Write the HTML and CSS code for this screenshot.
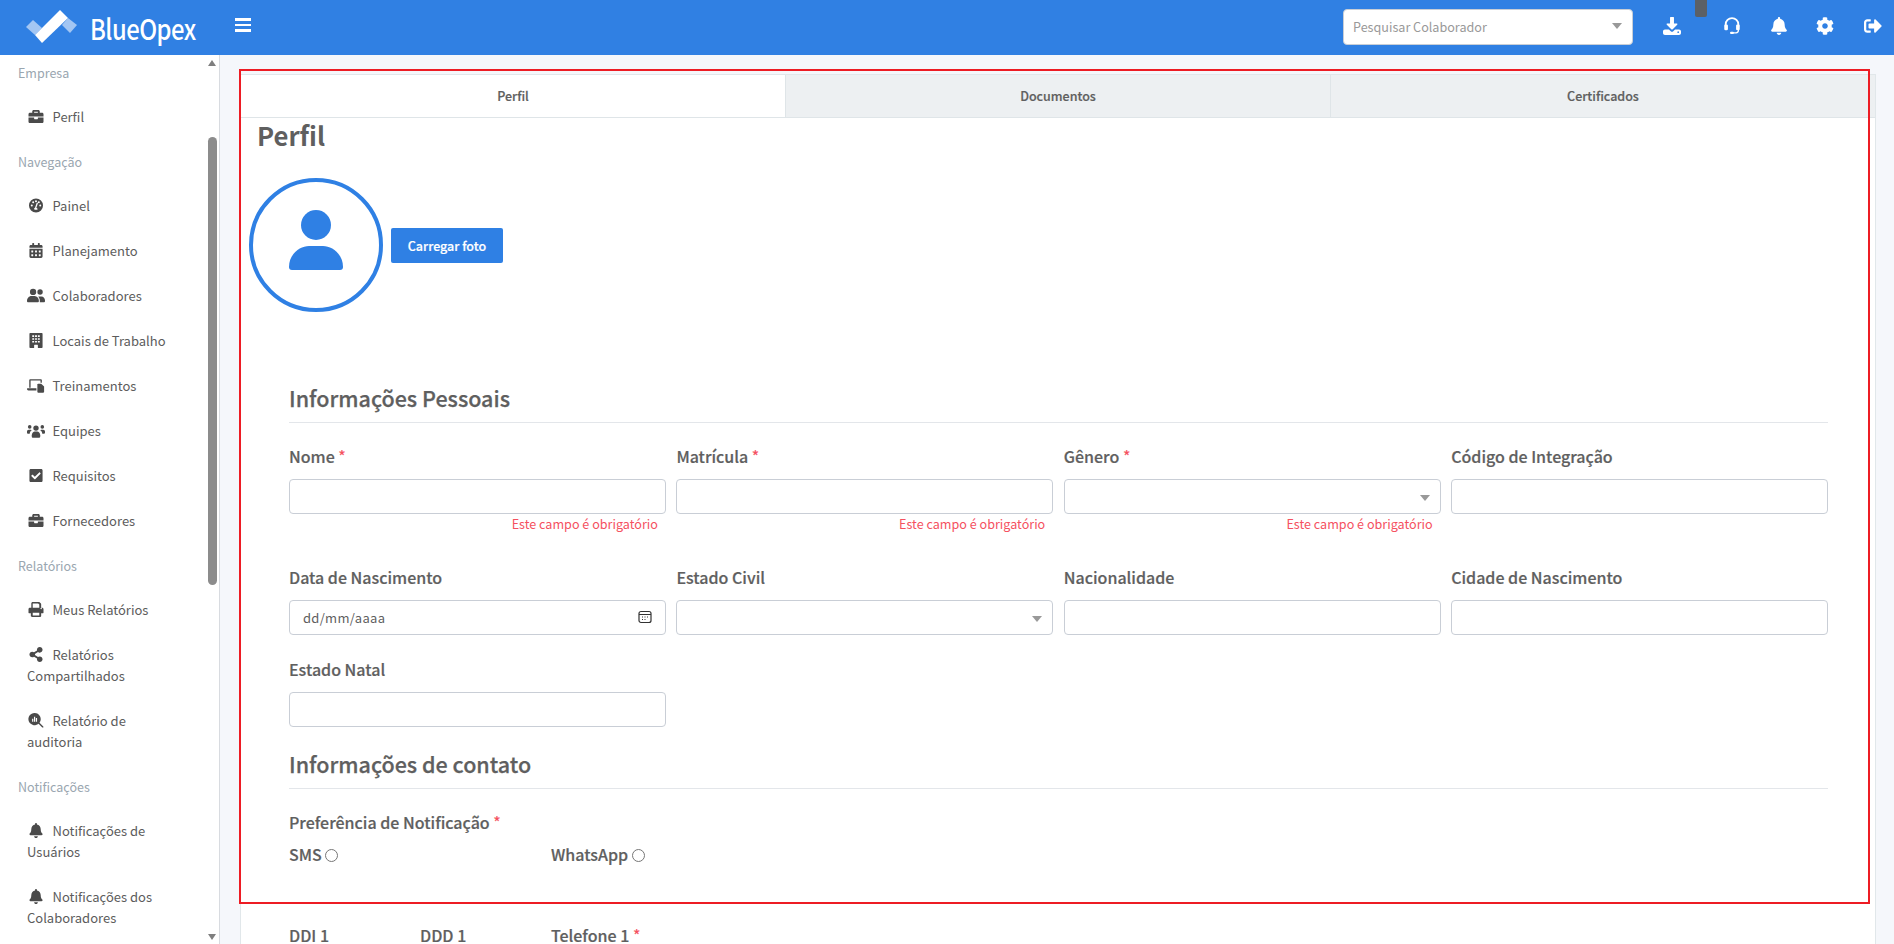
FILE: index.html
```html
<!DOCTYPE html>
<html lang="pt-BR">
<head>
    <meta charset="UTF-8">
    <meta name="viewport" content="width=device-width, initial-scale=1.0">
    <title>BlueOpex - Perfil</title>
    <link rel="stylesheet" href="styles.css">
</head>
<body>
    <svg class="icon-defs" aria-hidden="true">
        <symbol id="i-briefcase" viewBox="0 0 512 512"><path d="M320 336c0 8.84-7.16 16-16 16h-96c-8.84 0-16-7.16-16-16v-48H0v144c0 25.6 22.4 48 48 48h416c25.6 0 48-22.4 48-48V288H320v48zm144-208h-80V80c0-25.6-22.4-48-48-48H176c-25.6 0-48 22.4-48 48v48H48c-25.6 0-48 22.4-48 48v80h512v-80c0-25.6-22.4-48-48-48zm-144 0H192V96h128v32z"/></symbol>
        <symbol id="i-gauge" viewBox="0 0 512 512"><path fill-rule="evenodd" d="M256 16a240 240 0 1 0 0 480 240 240 0 0 0 0-480zm0 64a34 34 0 1 1 0 68 34 34 0 0 1 0-68zM112 288a34 34 0 1 1 0-68 34 34 0 0 1 0 68zm48-112a34 34 0 1 1 0-68 34 34 0 0 1 0 68zm146 224H206a50 50 0 0 1 20-78l52-150a22 22 0 0 1 42 14l-52 150a50 50 0 0 1 38 64zm46-224a34 34 0 1 1 0-68 34 34 0 0 1 0 68zm48 112a34 34 0 1 1 0-68 34 34 0 0 1 0 68z"/></symbol>
        <symbol id="i-calendar" viewBox="0 0 448 512"><path d="M0 464c0 26.5 21.5 48 48 48h352c26.5 0 48-21.5 48-48V192H0v272zm320-196c0-6.6 5.4-12 12-12h40c6.6 0 12 5.4 12 12v40c0 6.6-5.4 12-12 12h-40c-6.6 0-12-5.4-12-12v-40zm0 128c0-6.6 5.4-12 12-12h40c6.6 0 12 5.4 12 12v40c0 6.6-5.4 12-12 12h-40c-6.6 0-12-5.4-12-12v-40zM192 268c0-6.6 5.4-12 12-12h40c6.6 0 12 5.4 12 12v40c0 6.6-5.4 12-12 12h-40c-6.6 0-12-5.4-12-12v-40zm0 128c0-6.6 5.4-12 12-12h40c6.6 0 12 5.4 12 12v40c0 6.6-5.4 12-12 12h-40c-6.6 0-12-5.4-12-12v-40zM64 268c0-6.6 5.4-12 12-12h40c6.6 0 12 5.4 12 12v40c0 6.6-5.4 12-12 12H76c-6.6 0-12-5.4-12-12v-40zm0 128c0-6.6 5.4-12 12-12h40c6.6 0 12 5.4 12 12v40c0 6.6-5.4 12-12 12H76c-6.6 0-12-5.4-12-12v-40zM400 64h-48V16c0-8.8-7.2-16-16-16h-32c-8.8 0-16 7.2-16 16v48H160V16c0-8.8-7.2-16-16-16h-32c-8.8 0-16 7.2-16 16v48H48C21.5 64 0 85.5 0 112v48h448v-48c0-26.5-21.5-48-48-48z"/></symbol>
        <symbol id="i-friends" viewBox="0 0 640 512"><circle cx="216" cy="130" r="112"/><circle cx="464" cy="130" r="96"/><path d="M0 440c0-88 70-168 160-168h112c88 0 150 78 150 168v24c0 18-14 32-32 32H32c-18 0-32-14-32-32v-24z"/><path d="M456 496h152c18 0 32-14 32-32v-32c0-72-54-144-128-144h-64c-18 0-34 4-48 12 32 34 56 84 56 144v52z"/></symbol>
        <symbol id="i-building" viewBox="0 0 448 512"><path fill-rule="evenodd" d="M24 0h400c13 0 24 11 24 24v464c0 13-11 24-24 24H288v-96c0-9-7-16-16-16h-96c-9 0-16 7-16 16v96H24c-13 0-24-11-24-24V24C0 11 11 0 24 0zm72 80v56h64V80H96zm96 0v56h64V80h-64zm96 0v56h64V80h-64zM96 176v56h64v-56H96zm96 0v56h64v-56h-64zm96 0v56h64v-56h-64zM96 272v56h64v-56H96zm96 0v56h64v-56h-64zm96 0v56h64v-56h-64z"/></symbol>
        <symbol id="i-devices" viewBox="0 0 640 512"><path d="M80 64c0-18 14-32 32-32h384c18 0 32 14 32 32v96h-48V80H128v256H80V64z"/><path d="M16 352h320v80H48c-26 0-48-22-48-48v-16c0-9 7-16 16-16z"/><path d="M400 192h104l104 104v184c0 18-14 32-32 32H400c-18 0-32-14-32-32V224c0-18 14-32 32-32z"/></symbol>
        <symbol id="i-users" viewBox="0 0 640 512"><circle cx="96" cy="128" r="64"/><circle cx="544" cy="128" r="64"/><circle cx="320" cy="170" r="96"/><path d="M170 480v-56c0-74 60-128 106-128h88c46 0 106 54 106 128v56c0 18-14 32-32 32H202c-18 0-32-14-32-32z"/><path d="M0 340v-44c0-36 28-64 64-64h64c16 0 32 6 44 18-42 24-68 58-76 122H32c-18 0-32-14-32-32zM640 340v-44c0-36-28-64-64-64h-64c-16 0-32 6-44 18 42 24 68 58 76 122h64c18 0 32-14 32-32z"/></symbol>
        <symbol id="i-check" viewBox="0 0 448 512"><path d="M400 480H48c-26.51 0-48-21.49-48-48V80c0-26.51 21.49-48 48-48h352c26.51 0 48 21.49 48 48v352c0 26.51-21.49 48-48 48zm-204.686-98.059l184-184c6.248-6.248 6.248-16.379 0-22.627l-22.627-22.627c-6.248-6.248-16.379-6.249-22.628 0L184 302.745l-70.059-70.059c-6.248-6.248-16.379-6.248-22.628 0l-22.627 22.627c-6.248 6.248-6.248 16.379 0 22.627l104 104c6.249 6.25 16.379 6.25 22.628.001z"/></symbol>
        <symbol id="i-print" viewBox="0 0 512 512"><path fill-rule="evenodd" d="M96 48c0-26 22-48 48-48h208c13 0 25 5 34 14l32 32c9 9 14 21 14 34v112h32c26 0 48 22 48 48v128c0 9-7 16-16 16h-64v96c0 18-14 32-32 32H112c-18 0-32-14-32-32v-96H16c-9 0-16-7-16-16V240c0-26 22-48 48-48h48V48zm48 144h224V88l-40-40H144v144zm0 176v96h224v-96H144zm288-120a24 24 0 1 0 0-48 24 24 0 0 0 0 48z"/></symbol>
        <symbol id="i-share" viewBox="0 0 448 512"><path d="M352 320c-22.608 0-43.387 7.819-59.79 20.895l-102.486-64.054a96.551 96.551 0 0 0 0-41.683l102.486-64.054C308.613 184.181 329.392 192 352 192c53.019 0 96-42.981 96-96S405.019 0 352 0s-96 42.981-96 96c0 7.158.79 14.13 2.276 20.841L155.790 180.895C139.387 167.819 118.608 160 96 160c-53.019 0-96 42.981-96 96s42.981 96 96 96c22.608 0 43.387-7.819 59.79-20.895l102.486 64.054A96.301 96.301 0 0 0 256 416c0 53.019 42.981 96 96 96s96-42.981 96-96-42.981-96-96-96z"/></symbol>
        <symbol id="i-audit" viewBox="0 0 512 512"><path fill-rule="evenodd" d="M208 0a208 208 0 0 1 168 330l128 128c9 9 9 25 0 34s-25 9-34 0L342 364A208 208 0 1 1 208 0zm-84 200v96h40v-96h-40zm64-70v166h40V130h-40zm64 40v126h40V170h-40z"/></symbol>
        <symbol id="i-bell" viewBox="0 0 448 512"><path d="M224 512c35.32 0 63.97-28.65 63.97-64H160.03c0 35.35 28.65 64 63.97 64zm215.39-149.71c-19.32-20.76-55.47-51.99-55.47-154.29 0-77.7-54.48-139.9-127.94-155.16V32c0-17.67-14.32-32-31.98-32s-31.98 14.33-31.98 32v20.84C118.56 68.1 64.08 130.3 64.08 208c0 102.3-36.15 133.53-55.47 154.29-6 6.45-8.66 14.16-8.61 21.71.11 16.4 12.98 32 32.1 32h383.8c19.12 0 32-15.6 32.1-32 .05-7.55-2.61-15.27-8.61-21.71z"/></symbol>
        <symbol id="i-cog" viewBox="0 0 512 512"><path d="M487.4 315.7l-42.6-24.6c4.3-23.2 4.3-47 0-70.2l42.6-24.6c4.9-2.8 7.1-8.6 5.5-14-11.1-35.6-30-67.8-54.7-94.6-3.8-4.1-10-5.1-14.8-2.3L380.8 110c-17.9-15.4-38.5-27.3-60.8-35.1V25.8c0-5.6-3.9-10.5-9.4-11.7-36.7-8.2-74.3-7.8-109.2 0-5.5 1.2-9.4 6.1-9.4 11.7V75c-22.2 7.9-42.8 19.8-60.8 35.1L88.7 85.5c-4.9-2.8-11-1.9-14.8 2.3-24.7 26.7-43.6 58.9-54.7 94.6-1.7 5.4.6 11.2 5.5 14L67.3 221c-4.3 23.2-4.3 47 0 70.2l-42.6 24.6c-4.9 2.8-7.1 8.6-5.5 14 11.1 35.6 30 67.8 54.7 94.6 3.8 4.1 10 5.1 14.8 2.3l42.6-24.6c17.9 15.4 38.5 27.3 60.8 35.1v49.2c0 5.6 3.9 10.5 9.4 11.7 36.7 8.2 74.3 7.8 109.2 0 5.5-1.2 9.4-6.1 9.4-11.7v-49.2c22.2-7.9 42.8-19.8 60.8-35.1l42.6 24.6c4.9 2.8 11 1.9 14.8-2.3 24.7-26.7 43.6-58.9 54.7-94.6 1.5-5.5-.7-11.3-5.6-14.1zM256 336c-44.1 0-80-35.9-80-80s35.9-80 80-80 80 35.9 80 80-35.9 80-80 80z"/></symbol>
        <symbol id="i-download" viewBox="0 0 512 512"><path d="M216 0h80c9 0 16 7 16 16v168h78c18 0 27 21 14 34L270 352c-8 8-20 8-28 0L108 218c-13-13-4-34 14-34h78V16c0-9 7-16 16-16z"/><path d="M56 352h112l52 52c20 20 52 20 72 0l52-52h112c31 0 56 25 56 56v48c0 31-25 56-56 56H56c-31 0-56-25-56-56v-48c0-31 25-56 56-56zm376 104a24 24 0 1 0 0-48 24 24 0 0 0 0 48z" fill-rule="evenodd"/></symbol>
        <symbol id="i-headset" viewBox="0 0 512 512">
            <path d="M76 280v-70a180 180 0 0 1 360 0v70" fill="none" stroke="currentColor" stroke-width="52"/>
            <rect x="36" y="210" width="104" height="170" rx="40"/>
            <rect x="372" y="210" width="104" height="170" rx="40"/>
            <path d="M440 360v20a70 70 0 0 1-70 70H280" fill="none" stroke="currentColor" stroke-width="36"/>
            <rect x="200" y="420" width="110" height="64" rx="30"/>
        </symbol>
        <symbol id="i-signout" viewBox="0 0 512 512"><path d="M497 273L329 441c-15 15-41 4.500-41-17v-96H152c-13 0-24-11-24-24v-96c0-13 11-24 24-24h136V88c0-21 26-32 41-17l168 168c9 9 9 25 0 34z"/><path d="M192 436v-40c0-7-5-12-12-12H96c-18 0-32-14-32-32V160c0-18 14-32 32-32h84c7 0 12-5 12-12V76c0-7-5-12-12-12H96c-53 0-96 43-96 96v192c0 53 43 96 96 96h84c7 0 12-5 12-12z"/></symbol>
    </svg>

    <header class="topbar">
        <div class="brand">
            <svg class="brand-mark" viewBox="0 0 52 34">
                <path class="mark-light" d="M0 17l7-7 9 8-7 7z"/>
                <path class="mark-light" d="M42 8l9 7-7 8-8-8z"/>
                <path class="mark-white" d="M9 25l7-7L34 0l8 8-26 25z"/>
            </svg>
            <span class="brand-name">BlueOpex</span>
        </div>
        <div class="hamburger"><span></span><span></span><span></span></div>
        <div class="top-search">
            <span>Pesquisar Colaborador</span>
            <i class="caret"></i>
        </div>
        <nav class="top-icons">
            <svg class="top-icon"><use href="#i-download"/></svg>
            <svg class="top-icon"><use href="#i-headset"/></svg>
            <svg class="top-icon"><use href="#i-bell"/></svg>
            <svg class="top-icon"><use href="#i-cog"/></svg>
            <svg class="top-icon"><use href="#i-signout"/></svg>
        </nav>
        <div class="phone-tab"></div>
    </header>

    <div class="layout">
        <aside class="sidebar">
            <div class="side-title">Empresa</div>
            <a class="side-item"><svg class="side-icon"><use href="#i-briefcase"/></svg>Perfil</a>
            <div class="side-title">Navegação</div>
            <a class="side-item"><svg class="side-icon"><use href="#i-gauge"/></svg>Painel</a>
            <a class="side-item"><svg class="side-icon"><use href="#i-calendar"/></svg>Planejamento</a>
            <a class="side-item"><svg class="side-icon"><use href="#i-friends"/></svg>Colaboradores</a>
            <a class="side-item"><svg class="side-icon"><use href="#i-building"/></svg>Locais de Trabalho</a>
            <a class="side-item"><svg class="side-icon"><use href="#i-devices"/></svg>Treinamentos</a>
            <a class="side-item"><svg class="side-icon"><use href="#i-users"/></svg>Equipes</a>
            <a class="side-item"><svg class="side-icon"><use href="#i-check"/></svg>Requisitos</a>
            <a class="side-item"><svg class="side-icon"><use href="#i-briefcase"/></svg>Fornecedores</a>
            <div class="side-title">Relatórios</div>
            <a class="side-item"><svg class="side-icon"><use href="#i-print"/></svg>Meus Relatórios</a>
            <a class="side-item"><svg class="side-icon"><use href="#i-share"/></svg>Relatórios Compartilhados</a>
            <a class="side-item"><svg class="side-icon"><use href="#i-audit"/></svg>Relatório de auditoria</a>
            <div class="side-title">Notificações</div>
            <a class="side-item"><svg class="side-icon"><use href="#i-bell"/></svg>Notificações de Usuários</a>
            <a class="side-item"><svg class="side-icon"><use href="#i-bell"/></svg>Notificações dos Colaboradores</a>
            <div class="scroll-up"></div>
            <div class="scroll-thumb"></div>
            <div class="scroll-down"></div>
        </aside>

        <main class="content">
            <section class="card">
                <div class="tabs">
                    <div class="tab active">Perfil</div>
                    <div class="tab">Documentos</div>
                    <div class="tab">Certificados</div>
                </div>
                <h1 class="page-title">Perfil</h1>
                <div class="photo-row">
                    <div class="avatar">
                        <svg viewBox="0 0 54 60" class="avatar-icon">
                            <circle cx="27" cy="15" r="15"/>
                            <path d="M0 57C0 44 11 36 20 36h14c9 0 20 8 20 21 0 2-1 3-3 3H3c-2 0-3-1-3-3z"/>
                        </svg>
                    </div>
                    <button class="btn-upload">Carregar foto</button>
                </div>

                <div class="form">
                    <h2 class="section-title first">Informações Pessoais</h2>
                    <div class="form-row">
                        <div class="field">
                            <label>Nome <b>*</b></label>
                            <input type="text">
                            <div class="error">Este campo é obrigatório</div>
                        </div>
                        <div class="field">
                            <label>Matrícula <b>*</b></label>
                            <input type="text">
                            <div class="error">Este campo é obrigatório</div>
                        </div>
                        <div class="field">
                            <label>Gênero <b>*</b></label>
                            <div class="select"><i class="caret"></i></div>
                            <div class="error">Este campo é obrigatório</div>
                        </div>
                        <div class="field">
                            <label>Código de Integração</label>
                            <input type="text">
                        </div>
                    </div>
                    <div class="form-row">
                        <div class="field">
                            <label>Data de Nascimento</label>
                            <div class="select date">dd/mm/aaaa
                                <svg class="date-icon" viewBox="0 0 14 14">
                                    <rect x="1" y="1.500" width="12" height="11" rx="2"/>
                                    <path d="M1 4.500h12M4 7h1M6.500 7h1M9 7h1M4 9.500h1M6.500 9.500h1"/>
                                </svg>
                            </div>
                        </div>
                        <div class="field">
                            <label>Estado Civil</label>
                            <div class="select"><i class="caret"></i></div>
                        </div>
                        <div class="field">
                            <label>Nacionalidade</label>
                            <input type="text">
                        </div>
                        <div class="field">
                            <label>Cidade de Nascimento</label>
                            <input type="text">
                        </div>
                    </div>
                    <div class="form-row">
                        <div class="field">
                            <label>Estado Natal</label>
                            <input type="text">
                        </div>
                    </div>

                    <h2 class="section-title contact">Informações de contato</h2>
                    <label class="pref-label">Preferência de Notificação <b>*</b></label>
                    <div class="radio-row">
                        <label>SMS <input type="radio" name="pref"></label>
                        <label>WhatsApp <input type="radio" name="pref"></label>
                    </div>
                    <div class="phone-row">
                        <label>DDI 1</label>
                        <label>DDD 1</label>
                        <label>Telefone 1 <b>*</b></label>
                    </div>
                </div>
            </section>
        </main>
    </div>

    <div class="highlight"></div>
</body>
</html>
```

FILE: styles.css
```css
* {
    box-sizing: border-box;
}
html, body {
    height: 100%;
}
body {
    margin: 0;
    overflow: hidden;
    display: flex;
    flex-direction: column;
    background-color: #f5f7fb;
    color: #5f5f5f;
    font-family: "Noto Sans CJK SC", "Noto Sans", sans-serif;
    font-size: 13px;
}
.icon-defs {
    display: none;
}

/* top bar */
.topbar {
    position: relative;
    flex: none;
    height: 55px;
    display: flex;
    align-items: center;
    background-color: #3080e3;
    color: #fff;
}
.brand {
    width: 235px;
    display: flex;
    align-items: center;
    padding-left: 26px;
}
.brand-mark {
    width: 52px;
    height: 34px;
    margin-top: -1px;
}
.mark-light {
    fill: #a3c6f3;
}
.mark-white {
    fill: #fff;
}
.brand-name {
    margin-left: 12px;
    font-size: 28px;
    font-weight: 500;
    line-height: 36px;
    letter-spacing: -0.6px;
    transform: scaleX(0.85);
    transform-origin: left center;
    white-space: nowrap;
    width: 105px;
}
.hamburger {
    width: 16px;
    margin-top: -2px;
}
.hamburger span {
    display: block;
    height: 2.5px;
    margin-bottom: 3px;
    background-color: #fff;
}
.top-search {
    position: relative;
    margin-left: 1092px;
    width: 290px;
    height: 36px;
    padding-left: 9px;
    line-height: 33px;
    margin-top: -1px;
    background-color: #fff;
    border: 1px solid #c8ced6;
    border-radius: 4px;
    color: #999;
    font-size: 12.6px;
}
.caret {
    position: absolute;
    top: 15px;
    right: 10px;
    border-style: solid;
    border-width: 6px 5.500px 0;
    border-color: #999 transparent transparent;
}
.top-search .caret {
    top: 13px;
}
.top-icons {
    position: absolute;
    top: 0;
    left: 1662px;
    height: 55px;
}
.top-icon {
    position: absolute;
    top: 17px;
    width: 18px;
    height: 18px;
    fill: #fff;
}
.top-icon:nth-child(1) { left: 1px; }
.top-icon:nth-child(2) { left: 61px; }
.top-icon:nth-child(3) { left: 108px; }
.top-icon:nth-child(4) { left: 154px; }
.top-icon:nth-child(5) { left: 202px; }
.phone-tab {
    position: absolute;
    top: 0;
    left: 1695px;
    width: 12px;
    height: 17px;
    background-color: #5b6066;
    border-radius: 0 0 2px 2px;
}

/* sidebar */
.layout {
    flex: 1;
    min-height: 0;
    display: flex;
}
.sidebar {
    position: relative;
    flex: none;
    width: 220px;
    padding: 7px 40px 0 0;
    background-color: #fff;
    border-right: 1px solid #d8dbe0;
    overflow: hidden;
    color: #5c5c5c;
    font-size: 13px;
}
.side-title {
    height: 22px;
    margin-bottom: 22px;
    padding-left: 18px;
    line-height: 22px;
    color: #9aa6b0;
    font-size: 12.5px;
}
.side-item {
    display: block;
    margin-bottom: 24px;
    padding-left: 27px;
    line-height: 21px;
}
.side-icon {
    width: 18px;
    height: 15px;
    margin-right: 7.500px;
    vertical-align: -2px;
    fill: #4a4a4a;
    overflow: visible;
}
.scroll-thumb {
    position: absolute;
    top: 82px;
    left: 208px;
    width: 9px;
    height: 448px;
    background-color: #8c8c8c;
    border-radius: 5px;
}
.scroll-up, .scroll-down {
    position: absolute;
    left: 208px;
    border-style: solid;
    border-color: transparent;
    border-width: 0 4.500px;
}
.scroll-up {
    top: 5px;
    border-bottom: 6px solid #7f7f7f;
}
.scroll-down {
    bottom: 4px;
    border-top: 6px solid #7f7f7f;
}

/* main card */
.content {
    flex: 1;
    min-width: 0;
    padding: 19px 18px 0 20px;
}
.card {
    background-color: #fff;
    border: 1px solid #e1e7ea;
    border-bottom: none;
    height: 900px;
}
.tabs {
    display: grid;
    grid-template-columns: 545px 545px 1fr;
    height: 43px;
}
.tab {
    background-color: #edf0f2;
    border-right: 1px solid #dfe5e8;
    border-bottom: 1px solid #dfe5e8;
    text-align: center;
    line-height: 42px;
    font-size: 12.5px;
    font-weight: 500;
    -webkit-text-stroke: 0.2px;
}
.tab.active {
    background-color: #fff;
}
.tab:last-child {
    border-right: none;
}
.page-title {
    margin: 0 0 0 16px;
    height: 35px;
    font-size: 25.700px;
    line-height: 34px;
    font-weight: 700;
}
.photo-row {
    display: flex;
    align-items: center;
    margin-top: 25px;
    padding-left: 8px;
}
.avatar {
    width: 134px;
    height: 134px;
    display: flex;
    align-items: center;
    justify-content: center;
    border: 4px solid #2f80e4;
    border-radius: 50%;
}
.avatar-icon {
    width: 54px;
    height: 60px;
    margin-top: -10px;
    fill: #2f80e4;
}
.btn-upload {
    margin-left: 8px;
    margin-top: 1px;
    width: 112px;
    height: 35px;
    padding: 0;
    background-color: #2f80e4;
    border: none;
    border-radius: 2px;
    color: #fff;
    font-family: inherit;
    font-size: 12.5px;
    font-weight: 500;
    -webkit-text-stroke: 0.2px;
}

/* form */
.form {
    padding: 0 47px 0 48px;
}
.section-title {
    margin: 22px 0 0;
    padding-bottom: 8px;
    border-bottom: 1px solid #e3e6ea;
    font-size: 21.500px;
    line-height: 29px;
    font-weight: 500;
    height: 40px;
    -webkit-text-stroke: 0.25px;
}
.section-title.first {
    margin-top: 71px;
}
.form-row {
    display: grid;
    grid-template-columns: repeat(4, 1fr);
    column-gap: 10.500px;
    margin-top: 22px;
}
.form-row + .form-row {
    margin-top: 23px;
}
.field label, .pref-label, .radio-row label, .phone-row label {
    display: block;
    height: 24px;
    line-height: 24px;
    font-size: 16px;
    font-weight: 500;
    -webkit-text-stroke: 0.2px;
}
.field label {
    line-height: 22px;
}
b {
    color: #f5515f;
    font-weight: 400;
}
.field input, .select {
    position: relative;
    display: block;
    width: 100%;
    height: 35px;
    margin-top: 10px;
    background-color: #fff;
    border: 1px solid #c9ced6;
    border-radius: 4px;
}
.date {
    padding-left: 13px;
    line-height: 33px;
    font-size: 13px;
    letter-spacing: 0.3px;
}
.date-icon {
    position: absolute;
    top: 9px;
    right: 13px;
    width: 14px;
    height: 14px;
    fill: none;
    stroke: #333;
    stroke-width: 1.200px;
}
.error {
    height: 29px;
    padding-right: 8px;
    text-align: right;
    line-height: 20px;
    color: #f5515f;
    font-size: 12.6px;
}
.pref-label {
    margin-top: 21px;
}
.radio-row {
    display: grid;
    grid-template-columns: 262px 1fr;
    margin-top: 8px;
}
.radio-row input {
    width: 13px;
    height: 13px;
    margin: 0;
    vertical-align: -1px;
}
.phone-row {
    display: grid;
    grid-template-columns: 131px 131px 1fr;
    margin-top: 57px;
}

/* red marker drawn over the screenshot */
.highlight {
    position: absolute;
    top: 69px;
    left: 239px;
    width: 1631px;
    height: 835px;
    border: 2px solid #ed1c24;
    pointer-events: none;
}
```
